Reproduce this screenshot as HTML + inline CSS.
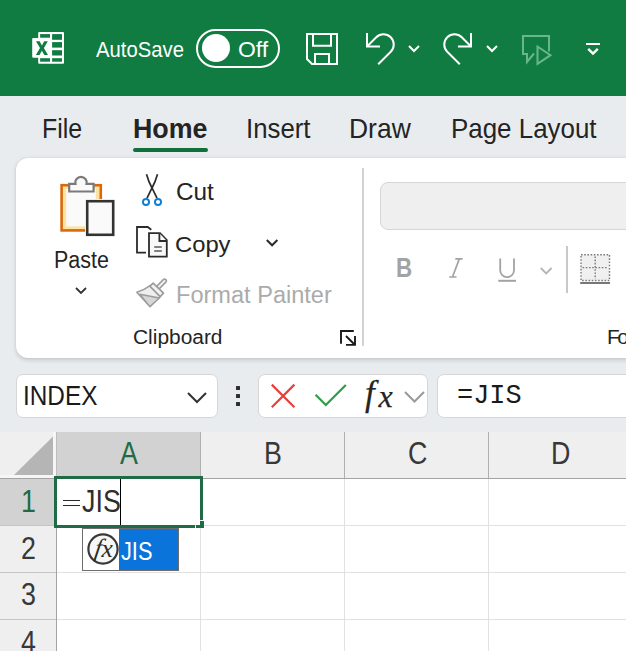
<!DOCTYPE html>
<html><head><meta charset="utf-8">
<style>
*{margin:0;padding:0;box-sizing:border-box}
html,body{width:626px;height:651px;overflow:hidden;background:#E9ECEF;font-family:"Liberation Sans",sans-serif;}
.abs{position:absolute}
.t{position:absolute;white-space:nowrap;line-height:1}
#title{position:absolute;left:0;top:0;width:626px;height:96px;background:#107C41}
#ribbon{position:absolute;left:16px;top:158px;width:640px;height:200px;background:#fff;border-radius:12px;box-shadow:0 1.5px 4px rgba(0,0,0,0.16),0 0 1.5px rgba(0,0,0,0.08)}
.g{font-size:30.5px;color:#383838;transform:scaleX(0.88);transform-origin:0 0}
.g2{font-size:26px;transform:scaleX(0.86);transform-origin:0 0}
.tab{position:absolute;color:#242424;line-height:1;white-space:nowrap}
</style></head><body>
<div id="title">
  <!-- excel logo -->
  <svg class="abs" style="left:30px;top:30px" width="36" height="36" viewBox="30 30 36 36">
    <rect x="38.2" y="32" width="25.8" height="31.8" rx="1" fill="#fff"/>
    <g fill="#107C41">
      <rect x="52.1" y="34.1" width="9.9" height="5.7"/>
      <rect x="52.1" y="42.1" width="9.9" height="5.5"/>
      <rect x="52.1" y="50.2" width="9.9" height="5.3"/>
      <rect x="52.1" y="58.2" width="9.9" height="3.5"/>
      <rect x="40.1" y="34.1" width="9.9" height="3.6"/>
      <rect x="40.1" y="58.2" width="9.9" height="3.5"/>
    </g>
    <rect x="32.2" y="38" width="19.8" height="19.8" rx="1" fill="#fff"/>
    <path d="M36 41.2H39.6L41.9 45.4L44.2 41.2H47.8L43.9 48.1L48 55H44.3L41.9 50.7L39.5 55H35.9L40 48.1Z" fill="#107C41"/>
  </svg>
  <div class="t" style="left:96.1px;top:38.6px;font-size:21.65px;transform:scaleX(0.937);transform-origin:0 0;color:#fff">AutoSave</div>
  <div class="abs" style="left:196px;top:28.5px;width:84px;height:39.2px;border:2px solid #fff;border-radius:19.6px"></div>
  <div class="abs" style="left:202px;top:34px;width:28px;height:28px;border-radius:50%;background:#fff"></div>
  <div class="t" style="left:237.5px;top:38.6px;font-size:21.65px;transform:scaleX(1.06);transform-origin:0 0;color:#fff">Off</div>
  <!-- save -->
  <svg class="abs" style="left:300px;top:26px" width="44" height="44" viewBox="300 26 44 44">
    <path d="M307 34H337V64H312L307 59Z" fill="none" stroke="#fff" stroke-width="2"/>
    <path d="M313 34V45.8H331V34" fill="none" stroke="#fff" stroke-width="2"/>
    <path d="M315 64V54H329V64" fill="none" stroke="#fff" stroke-width="2"/>
  </svg>
  <!-- undo -->
  <svg class="abs" style="left:360px;top:26px" width="44" height="44" viewBox="360 26 44 44">
    <path d="M367 33V46.5H380" fill="none" stroke="#fff" stroke-width="2"/>
    <path d="M367.5 46L376.25 37.25A10.25 10.25 0 0 1 390.75 51.75L378.2 64.2" fill="none" stroke="#fff" stroke-width="2"/>
  </svg>
  <svg class="abs" style="left:404px;top:40px" width="20" height="16" viewBox="404 40 20 16">
    <path d="M409 46L414 51L419 46" fill="none" stroke="#fff" stroke-width="2"/>
  </svg>
  <!-- redo -->
  <svg class="abs" style="left:440px;top:26px" width="44" height="44" viewBox="440 26 44 44">
    <path d="M471 33V46.5H458" fill="none" stroke="#fff" stroke-width="2"/>
    <path d="M470.5 46L461.75 37.25A10.25 10.25 0 0 0 447.25 51.75L459.8 64.2" fill="none" stroke="#fff" stroke-width="2"/>
  </svg>
  <svg class="abs" style="left:482px;top:40px" width="20" height="16" viewBox="482 40 20 16">
    <path d="M487 46L492 51L497 46" fill="none" stroke="#fff" stroke-width="2"/>
  </svg>
  <!-- present -->
  <svg class="abs" style="left:516px;top:30px" width="40" height="40" viewBox="516 30 40 40">
    <path d="M549 51.5V36H523V54H527V62L534 53.5" fill="none" stroke="#72BE92" stroke-width="2" stroke-opacity="0.9"/>
    <path d="M537.5 46.5L550.5 55.2L537.5 63.8Z" fill="none" stroke="#72BE92" stroke-width="2" stroke-opacity="0.9"/>
  </svg>
  <!-- ribbon options -->
  <svg class="abs" style="left:580px;top:38px" width="26" height="22" viewBox="580 38 26 22">
    <line x1="586" y1="44" x2="600" y2="44" stroke="#fff" stroke-width="2"/>
    <path d="M588.2 48.8L593 53.6L597.8 48.8" fill="none" stroke="#fff" stroke-width="2.4"/>
  </svg>
</div>

<div class="tab" style="left:42.4px;top:115.2px;font-size:27.09px;transform:scaleX(0.92);transform-origin:0 0;">File</div>
<div class="tab" style="left:133.4px;top:115.2px;font-size:27.09px;transform:scaleX(0.99);transform-origin:0 0;font-weight:bold">Home</div>
<div class="abs" style="left:133px;top:147.6px;width:75px;height:4.6px;border-radius:2.3px;background:#0F7039"></div>
<div class="tab" style="left:246.0px;top:115.2px;font-size:27.09px;transform:scaleX(0.952);transform-origin:0 0;">Insert</div>
<div class="tab" style="left:349.4px;top:115.2px;font-size:27.09px;transform:scaleX(0.977);transform-origin:0 0;">Draw</div>
<div class="tab" style="left:450.5px;top:115.2px;font-size:27.09px;transform:scaleX(0.957);transform-origin:0 0;">Page Layout</div>


<div id="ribbon"></div>
<!-- Paste icon -->
<svg class="abs" style="left:56px;top:172px" width="64" height="68" viewBox="56 172 64 68">
  <rect x="61.6" y="185.2" width="39.2" height="45.2" fill="#FCE3A0" stroke="#D9680F" stroke-width="2.6"/>
  <rect x="66.2" y="189" width="29.6" height="37.4" fill="#FAFAFA"/>
  <path d="M69.2 191.5V183.8H75.45A5.7 5.7 0 1 1 86.55 183.8H93.6V191.5Z" fill="#FAFAFA" stroke="#7A7A7A" stroke-width="2.2"/>
  <rect x="85" y="199" width="30.5" height="38" fill="#fff"/>
  <rect x="87.2" y="201.2" width="26" height="33.6" fill="#FAFAFA" stroke="#333" stroke-width="2.6"/>
</svg>
<div class="t" style="left:53.8px;top:249.4px;font-size:23.04px;transform:scaleX(0.932);transform-origin:0 0;color:#242424">Paste</div>
<svg class="abs" style="left:72px;top:283px" width="18" height="14" viewBox="72 283 18 14">
  <path d="M76 288L81 293L86 288" fill="none" stroke="#333" stroke-width="1.8"/>
</svg>
<!-- scissors -->
<svg class="abs" style="left:138px;top:172px" width="28" height="36" viewBox="138 172 28 36">
  <path d="M146.5 174.2Q148.5 181.5 152 188L157 198.2M157.5 174.2Q155.5 181.5 152 188L147 198.2" fill="none" stroke="#2B2B2B" stroke-width="1.7"/>
  <circle cx="146" cy="202" r="3.05" fill="none" stroke="#0E7DD2" stroke-width="1.9"/>
  <circle cx="158" cy="202" r="3.05" fill="none" stroke="#0E7DD2" stroke-width="1.9"/>
</svg>
<div class="t" style="left:176.2px;top:181.3px;font-size:23.32px;transform:scaleX(1.043);transform-origin:0 0;color:#242424">Cut</div>
<!-- copy -->
<svg class="abs" style="left:132px;top:222px" width="40" height="38" viewBox="132 222 40 38">
  <path d="M146 252.7H137V227H147.7L151.3 229.8" fill="none" stroke="#2B2B2B" stroke-width="1.8"/>
  <path d="M149 233.2H160L166.8 240V256.7H149Z" fill="#F8F8F8" stroke="#2B2B2B" stroke-width="1.8"/>
  <path d="M159.4 233.2V241H166.8" fill="#fff" stroke="#2B2B2B" stroke-width="1.8"/>
  <path d="M154.2 247.1H161.8M154.2 251.1H161.8" fill="none" stroke="#5A5A5A" stroke-width="1.5"/>
</svg>
<div class="t" style="left:175.4px;top:233px;font-size:22.91px;transform:scaleX(1.038);transform-origin:0 0;color:#242424">Copy</div>
<svg class="abs" style="left:262px;top:234px" width="20" height="16" viewBox="262 234 20 16">
  <path d="M266.8 240L272.1 245.3L277.4 240" fill="none" stroke="#2B2B2B" stroke-width="2"/>
</svg>
<!-- format painter -->
<svg class="abs" style="left:132px;top:274px" width="40" height="38" viewBox="132 274 40 38">
  <path d="M157.5 288L164.6 280.9" stroke="#9C9C9C" stroke-width="5.2" stroke-linecap="round"/>
  <path d="M157.5 288L164.6 280.9" stroke="#F2F2F2" stroke-width="2" stroke-linecap="round"/>
  <path d="M150 285.6Q143.5 290.5 136.8 292.2L149.9 306.6L160.2 296.6Z" fill="#EEEEEE" stroke="#9C9C9C" stroke-width="1.5" stroke-linejoin="round"/>
  <path d="M139.8 294.2L159.4 298L149.9 306.6Z" fill="#D6D6D6" stroke="#9C9C9C" stroke-width="1.4" stroke-linejoin="round"/>
  <path d="M153.2 283.2L163.5 293.2L160.2 296.6L149.8 286.2Z" fill="#F2F2F2" stroke="#9C9C9C" stroke-width="1.7" stroke-linejoin="round"/>
</svg>
<div class="t" style="left:175.9px;top:284.1px;font-size:23.04px;transform:scaleX(1.023);transform-origin:0 0;color:#ABABAB">Format Painter</div>
<div class="t" style="left:132.7px;top:327.3px;font-size:20.39px;transform:scaleX(1.026);transform-origin:0 0;color:#242424">Clipboard</div>
<svg class="abs" style="left:336px;top:326px" width="24" height="24" viewBox="336 326 24 24">
  <path d="M341 343.8V331H353.8" fill="none" stroke="#1A1A1A" stroke-width="1.9"/>
  <path d="M346 336L354.5 344.5M346 344.9H355V336" fill="none" stroke="#1A1A1A" stroke-width="1.9"/>
</svg>
<div class="abs" style="left:362px;top:168px;width:2px;height:178px;background:#D2D2D2"></div>
<!-- font group -->
<div class="abs" style="left:380px;top:182px;width:260px;height:47.6px;background:#EFEFEF;border:1.6px solid #D6D6D6;border-radius:8px"></div>
<div class="t" style="left:396px;top:253.8px;font-size:28px;font-weight:bold;color:#A3A3A3;transform:scaleX(0.8);transform-origin:0 0">B</div>
<svg class="abs" style="left:444px;top:252px" width="24" height="30" viewBox="444 252 24 30">
  <path d="M455.3 258.9H462.6M449.2 277H456.5M459.3 258.9L452.5 277" fill="none" stroke="#A3A3A3" stroke-width="1.7"/>
</svg>
<svg class="abs" style="left:494px;top:252px" width="26" height="34" viewBox="494 252 26 34">
  <path d="M500.2 258.5V270.3A6.9 6.9 0 0 0 514 270.3V258.5" fill="none" stroke="#A3A3A3" stroke-width="1.8"/>
  <rect x="498.3" y="279.8" width="17.7" height="2" fill="#A3A3A3"/>
</svg>
<svg class="abs" style="left:536px;top:262px" width="20" height="16" viewBox="536 262 20 16">
  <path d="M540.8 268L546.2 273.4L551.6 268" fill="none" stroke="#B5B5B5" stroke-width="1.8"/>
</svg>
<div class="abs" style="left:566px;top:246px;width:2px;height:47px;background:#C8C8C8"></div>
<svg class="abs" style="left:576px;top:250px" width="40" height="38" viewBox="576 250 40 38">
  <path d="M581 254.8H609.5V280.5H581Z" fill="#F0F0F0" stroke="#7A7A7A" stroke-width="1.4" stroke-dasharray="1.6 1.6"/>
  <path d="M595.2 256.4V279M582.6 267.6H608" fill="none" stroke="#7A7A7A" stroke-width="1.4" stroke-dasharray="1.6 1.6"/>
  <rect x="580.2" y="282" width="29.8" height="2" fill="#777"/>
</svg>
<div class="t" style="left:606.8px;top:327.3px;font-size:20.39px;transform:scaleX(1.026);transform-origin:0 0;color:#242424;letter-spacing:-2.5px">Fo</div>


<!-- formula bar -->
<div class="abs" style="left:16px;top:374px;width:202px;height:44px;background:#fff;border:1px solid #D6D6D6;border-radius:7px"></div>
<div class="t" style="left:22.9px;top:382.4px;font-size:27.23px;transform:scaleX(0.895);transform-origin:0 0;color:#1A1A1A">INDEX</div>
<svg class="abs" style="left:184px;top:388px" width="26" height="18" viewBox="184 388 26 18">
  <path d="M188 393L197 402L206 393" fill="none" stroke="#333" stroke-width="2"/>
</svg>
<div class="abs" style="left:236px;top:386px;width:4px;height:4px;border-radius:0.5px;background:#2E2E2E"></div>
<div class="abs" style="left:236px;top:394px;width:4px;height:4px;border-radius:0.5px;background:#2E2E2E"></div>
<div class="abs" style="left:236px;top:402px;width:4px;height:4px;border-radius:0.5px;background:#2E2E2E"></div>
<div class="abs" style="left:258px;top:374px;width:170px;height:44px;background:#fff;border:1px solid #D6D6D6;border-radius:7px"></div>
<svg class="abs" style="left:266px;top:380px" width="34" height="34" viewBox="266 380 34 34">
  <path d="M271.8 384.6L294.4 407.2M294.4 384.6L271.8 407.2" fill="none" stroke="#E8403F" stroke-width="2.2"/>
</svg>
<svg class="abs" style="left:310px;top:380px" width="40" height="34" viewBox="310 380 40 34">
  <path d="M315.6 394.8L325.8 405L345.8 385" fill="none" stroke="#2A9F46" stroke-width="2.2"/>
</svg>
<div class="t" style="left:365px;top:375.5px;font-size:35px;font-style:italic;color:#242424;font-family:'Liberation Serif',serif;-webkit-text-stroke:0.25px #242424">f</div>
<div class="t" style="left:378.5px;top:380px;font-size:32px;font-style:italic;color:#242424;font-family:'Liberation Serif',serif;-webkit-text-stroke:0.25px #242424">x</div>
<svg class="abs" style="left:402px;top:388px" width="26" height="18" viewBox="402 388 26 18">
  <path d="M405 392L414.5 401.5L424 392" fill="none" stroke="#9A9A9A" stroke-width="2"/>
</svg>
<div class="abs" style="left:437px;top:374px;width:200px;height:44px;background:#fff;border:1px solid #D6D6D6;border-radius:7px"></div>
<div class="t" style="left:456.5px;top:381.8px;font-size:28.18px;transform:scaleX(0.956);transform-origin:0 0;color:#1A1A1A;font-family:'Liberation Mono',monospace">=JIS</div>

<!-- grid -->
<div class="abs" style="left:0;top:432px;width:626px;height:219px;background:#fff"></div>
<div class="abs" style="left:0;top:432px;width:626px;height:46px;background:#EFEFEF"></div>
<div class="abs" style="left:0;top:432px;width:56px;height:219px;background:#EFEFEF"></div>
<div class="abs" style="left:57px;top:432px;width:143px;height:46px;background:#D2D2D2"></div>
<div class="abs" style="left:0;top:479px;width:56px;height:46px;background:#D2D2D2"></div>
<svg class="abs" style="left:0;top:432px" width="56" height="46" viewBox="0 432 56 46">
  <path d="M14 475L53 436.5V475Z" fill="#B5B5B5"/>
</svg>
<!-- header lines -->
<div class="abs" style="left:0;top:478px;width:626px;height:1px;background:#A3A3A3"></div>
<div class="abs" style="left:56px;top:478px;width:1px;height:173px;background:#A3A3A3"></div>
<div class="abs" style="left:56px;top:432px;width:1px;height:46px;background:#BDBDBD"></div>
<div class="abs" style="left:53px;top:432px;width:3px;height:46px;background:#F6F6F6"></div>
<div class="abs" style="left:0;top:475px;width:56px;height:3px;background:#F6F6F6"></div>
<div class="abs" style="left:200px;top:432px;width:1px;height:46px;background:#B0B0B0"></div>
<div class="abs" style="left:344px;top:432px;width:1px;height:46px;background:#B0B0B0"></div>
<div class="abs" style="left:488px;top:432px;width:1px;height:46px;background:#B0B0B0"></div>
<!-- cell lines -->
<div class="abs" style="left:200px;top:479px;width:1px;height:172px;background:#E1E1E1"></div>
<div class="abs" style="left:344px;top:479px;width:1px;height:172px;background:#E1E1E1"></div>
<div class="abs" style="left:488px;top:479px;width:1px;height:172px;background:#E1E1E1"></div>
<div class="abs" style="left:57px;top:525px;width:569px;height:1px;background:#E1E1E1"></div>
<div class="abs" style="left:57px;top:572px;width:569px;height:1px;background:#E1E1E1"></div>
<div class="abs" style="left:57px;top:619px;width:569px;height:1px;background:#E1E1E1"></div>
<div class="abs" style="left:0;top:525px;width:56px;height:1px;background:#C4C4C4"></div>
<div class="abs" style="left:0;top:572px;width:56px;height:1px;background:#C4C4C4"></div>
<div class="abs" style="left:0;top:619px;width:56px;height:1px;background:#C4C4C4"></div>
<!-- headers text -->
<div class="t g" style="left:120px;top:438px;color:#1E6B45">A</div>
<div class="t g" style="left:264px;top:438px">B</div>
<div class="t g" style="left:407.5px;top:438px">C</div>
<div class="t g" style="left:551px;top:438px">D</div>
<div class="t g" style="left:21px;top:486px;color:#1E6B45">1</div>
<div class="t g" style="left:21px;top:533px">2</div>
<div class="t g" style="left:21px;top:579px">3</div>
<div class="t g" style="left:21px;top:627px">4</div>
<!-- active cell -->
<div class="abs" style="left:54px;top:476px;width:149px;height:3px;background:#1E6B45"></div>
<div class="abs" style="left:54px;top:476px;width:3px;height:52px;background:#1E6B45"></div>
<div class="abs" style="left:54px;top:525px;width:141px;height:3px;background:#1E6B45"></div>
<div class="abs" style="left:200px;top:476px;width:3px;height:44px;background:#1E6B45"></div>
<div class="abs" style="left:200px;top:521px;width:4px;height:7px;background:#1E6B45"></div>
<div class="abs" style="left:196px;top:525px;width:8px;height:3px;background:#1E6B45"></div>
<div class="abs" style="left:63px;top:500px;width:17px;height:1.3px;background:#2A2A2A"></div><div class="abs" style="left:63px;top:505px;width:17px;height:1.3px;background:#2A2A2A"></div>
<div class="t g" style="left:82px;top:486px;color:#2E2E2E">JIS</div>
<div class="abs" style="left:120px;top:479px;width:1px;height:46px;background:#000"></div>
<!-- autocomplete -->
<div class="abs" style="left:82px;top:528px;width:97px;height:43px;background:#fff;border:1px solid #6E6E6E"></div>
<div class="abs" style="left:119px;top:529px;width:59px;height:41px;background:#0A74DA"></div>
<svg class="abs" style="left:84px;top:530px" width="36" height="38" viewBox="84 530 36 38">
  <circle cx="103" cy="549" r="14.6" fill="#F7F7F7" stroke="#383838" stroke-width="2.2"/>
</svg>
<div class="t" style="left:92.5px;top:535px;font-size:25px;font-style:italic;color:#2A2A2A;font-family:'Liberation Serif',serif;transform:skewX(-9deg);transform-origin:0 100%">f</div>
<div class="t" style="left:101.5px;top:535.5px;font-size:25.5px;font-style:italic;color:#2A2A2A;font-family:'Liberation Serif',serif">x</div>
<div class="t g2" style="left:121px;top:537.6px;color:#fff;font-size:26.5px;transform:scaleX(0.82)">JIS</div>
</body></html>
